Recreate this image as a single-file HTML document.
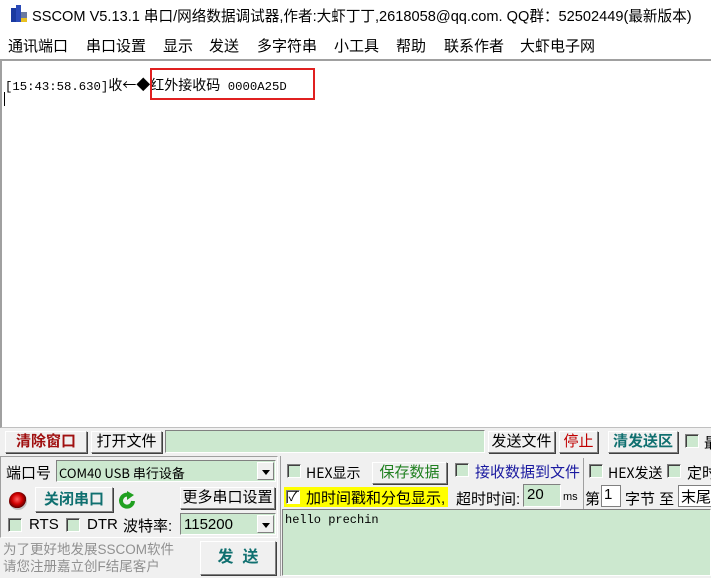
<!DOCTYPE html><html><head><meta charset="utf-8"><style>
*{margin:0;padding:0;box-sizing:border-box}
body{width:711px;height:578px;position:relative;overflow:hidden;background:#f0f0f0;font-family:"Liberation Sans","Noto Sans CJK SC",sans-serif;color:#000}
.a{position:absolute;white-space:nowrap}
.s{font-family:"SimSun","Noto Sans CJK SC",sans-serif;font-size:14px}
.btn{position:absolute;background:#f0f0f0;border:1px solid;border-color:#fff #808080 #808080 #fff;box-shadow:1px 1px 0 #404040;text-align:center;font-size:15px;line-height:20px}
.g{position:absolute;background:#cce8cf;border:1px solid;border-color:#808080 #fff #fff #808080}
.cb{position:absolute;width:14px;height:14px;background:#cce8cf;border:1px solid;border-color:#808080 #fff #fff #808080;box-shadow:inset 1px 1px 0 #404040}
.dd{position:absolute;right:1px;top:1px;width:17px;bottom:1px;background:#f0f0f0;border:1px solid;border-color:#fff #808080 #808080 #fff}
.dd:after{content:"";position:absolute;left:4px;top:7px;border:4px solid transparent;border-top:5px solid #000}
.m{position:absolute;top:35px;font-size:15px;white-space:nowrap}
</style></head><body>
<div class="a" style="left:0;top:0;width:711px;height:59px;background:#fff"></div>
<svg class="a" style="left:10px;top:5px" width="18" height="18"><rect x="1" y="3" width="5" height="14" fill="#1a3aa0"/><rect x="6" y="0" width="5" height="17" fill="#2a4ab8"/><rect x="11" y="7" width="6" height="10" fill="#6a7aa0"/><rect x="11" y="13" width="6" height="4" fill="#e8c020"/></svg>
<div class="a" style="left:32px;top:5px;font-size:14.6px">SSCOM V5.13.1 串口/网络数据调试器,作者:大虾丁丁,2618058@qq.com. QQ群：52502449(最新版本)</div>
<span class="m" style="left:8px">通讯端口</span><span class="m" style="left:86px">串口设置</span><span class="m" style="left:163px">显示</span><span class="m" style="left:209px">发送</span><span class="m" style="left:257px">多字符串</span><span class="m" style="left:334px">小工具</span><span class="m" style="left:396px">帮助</span><span class="m" style="left:444px">联系作者</span><span class="m" style="left:520px">大虾电子网</span>
<div class="a" style="left:0;top:59px;width:711px;height:369px;background:#fff;border-top:2px solid #a0a0a0;border-left:2px solid #a0a0a0;border-bottom:1px solid #c0c0c0"></div>
<div class="a" style="left:5px;top:75px;font-size:12.3px;font-family:'Liberation Mono',monospace">[15:43:58.630]<span style="font-family:'Noto Sans CJK SC';font-size:14px">收←◆红外接收码</span> 0000A25D</div>
<div class="a" style="left:4px;top:92px;width:1px;height:14px;background:#000"></div>
<div class="a" style="left:150px;top:68px;width:165px;height:32px;border:2px solid #e02020"></div>

<div class="btn" style="left:5px;top:431px;width:82px;height:22px;color:#a01010;font-weight:bold">清除窗口</div>
<div class="btn" style="left:91px;top:431px;width:71px;height:22px">打开文件</div>
<div class="g" style="left:165px;top:430px;width:320px;height:23px"></div>
<div class="btn" style="left:488px;top:431px;width:67px;height:22px">发送文件</div>
<div class="btn" style="left:559px;top:431px;width:39px;height:22px;color:#c00000">停止</div>
<div class="btn" style="left:608px;top:431px;width:70px;height:22px;color:#107070;font-weight:bold">清发送区</div>
<div class="cb" style="left:685px;top:434px"></div>
<div class="a" style="left:704px;top:432px;font-size:15px">最</div>

<div class="a" style="left:0;top:456px;width:278px;height:82px;border:1px solid;border-color:#a0a0a0 #fff #fff #a0a0a0"></div>
<div class="a" style="left:6px;top:462px;font-size:15px">端口号</div>
<div class="g" style="left:56px;top:460px;width:220px;height:22px"><span class="a s" style="left:2px;top:2px;font-size:13px">COM40 USB 串行设备</span><div class="dd"></div></div>
<div class="a" style="left:9px;top:492px;width:18px;height:18px;border-radius:50%;background:radial-gradient(circle at 45% 40%,#ff6060 0,#d00000 35%,#600000 60%,#c0c0c0 62%)"></div>
<div class="btn" style="left:35px;top:487px;width:78px;height:25px;color:#107070;font-weight:bold;line-height:24px">关闭串口</div>
<svg class="a" style="left:118px;top:491px" width="20" height="20"><path d="M15 10 A6 6 0 1 1 11 4" fill="none" stroke="#20a020" stroke-width="4"/><path d="M9 0 L16 4 L9 9 Z" fill="#20a020"/></svg>
<div class="btn" style="left:180px;top:487px;width:95px;height:22px">更多串口设置</div>
<div class="cb" style="left:8px;top:518px"></div><div class="a" style="left:29px;top:516px;font-size:15px">RTS</div>
<div class="cb" style="left:66px;top:518px"></div><div class="a" style="left:87px;top:516px;font-size:15px">DTR</div>
<div class="a" style="left:123px;top:515px;font-size:15px">波特率:</div>
<div class="g" style="left:180px;top:513px;width:96px;height:22px"><span class="a" style="left:3px;top:2px;font-size:15px">115200</span><div class="dd"></div></div>
<div class="a" style="left:3px;top:541px;font-size:13.5px;color:#909090;line-height:17px">为了更好地发展SSCOM软件<br>请您注册嘉立创F结尾客户</div>
<div class="btn" style="left:200px;top:541px;width:76px;height:34px;line-height:32px;color:#107070;font-weight:bold;font-size:16px">发&nbsp;&nbsp;送</div>

<div class="a" style="left:280px;top:456px;width:1px;height:120px;background:#a0a0a0"></div>
<div class="cb" style="left:287px;top:464px"></div>
<div class="a s" style="left:306px;top:463px">HEX显示</div>
<div class="btn" style="left:372px;top:462px;width:75px;height:22px;color:#208020">保存数据</div>
<div class="cb" style="left:455px;top:463px"></div>
<div class="a" style="left:475px;top:461px;font-size:15px;color:#1a1aa0">接收数据到文件</div>
<div class="a" style="left:583px;top:458px;width:1px;height:52px;background:#a0a0a0"></div>
<div class="cb" style="left:589px;top:464px"></div>
<div class="a s" style="left:608px;top:463px">HEX发送</div>
<div class="cb" style="left:667px;top:464px"></div>
<div class="a" style="left:687px;top:462px;font-size:15px">定时</div>

<div class="a" style="left:284px;top:487px;width:164px;height:20px;background:#ffff00"></div>
<div class="cb" style="left:286px;top:490px;background:#fff;font-size:13px;line-height:11px;text-align:center">✓</div>
<div class="a" style="left:306px;top:487px;font-size:15px">加时间戳和分包显示,</div>
<div class="a" style="left:456px;top:488px;font-size:15px">超时时间:</div>
<div class="g" style="left:523px;top:484px;width:38px;height:23px"><span class="a" style="left:3px;top:1px;font-size:15px">20</span></div>
<div class="a" style="left:563px;top:491px;font-size:11px">ms</div>
<div class="a" style="left:585px;top:488px;font-size:15px">第</div>
<div class="a" style="left:601px;top:485px;width:20px;height:22px;background:#fff;border:1px solid #808080;font-size:15px;padding-left:2px">1</div>
<div class="a" style="left:625px;top:488px;font-size:15px">字节 至</div>
<div class="a" style="left:678px;top:485px;width:40px;height:22px;background:#fff;border:1px solid #808080;font-size:15px;padding-left:2px">末尾</div>
<div class="g" style="left:282px;top:509px;width:429px;height:67px"><span class="a" style="left:2px;top:3px;font-family:'Liberation Mono',monospace;font-size:12px">hello prechin</span></div>
</body></html>
